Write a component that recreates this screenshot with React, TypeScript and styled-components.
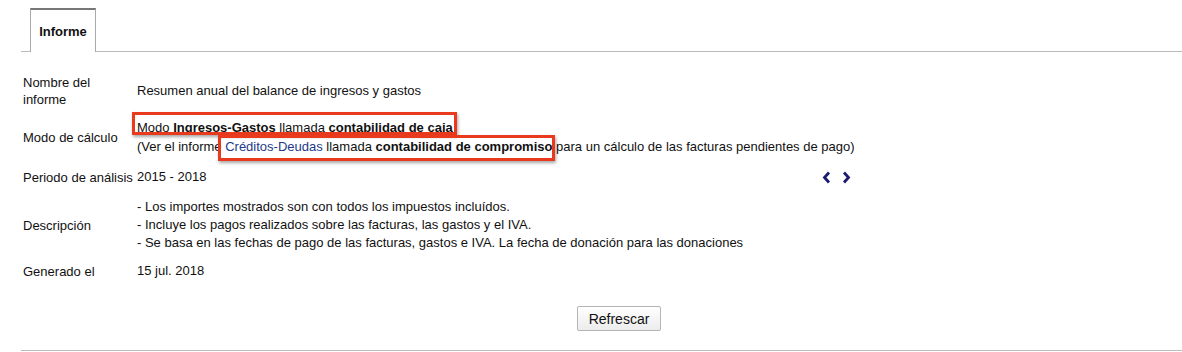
import styled, { createGlobalStyle } from "styled-components";

const GlobalStyle = createGlobalStyle`
  html, body {
    margin: 0;
    padding: 0;
    background: #fff;
  }
  body {
    font-family: "Liberation Sans", Arial, sans-serif;
    font-size: 13px;
    color: #111;
  }
`;

const Page = styled.div`
  width: 1182px;
  height: 352px;
  overflow: hidden;
`;

const TabBar = styled.div`
  display: flex;
  margin-left: 21px;
  padding-top: 8px;
  padding-left: 9px;
  border-bottom: 1px solid #bcbcbc;
`;

const Tab = styled.div`
  width: 66px;
  height: 44px;
  box-sizing: border-box;
  border: 1px solid #aaa;
  border-top: 2px solid #777;
  border-bottom: none;
  display: flex;
  align-items: center;
  justify-content: center;
  font-weight: bold;
  font-size: 13px;
  color: #111;
  margin-bottom: -1px;
  background: #fff;
`;

const Content = styled.div`
  padding: 17px 0 0 23px;
`;

const InfoTable = styled.div`
  width: 840px;
  display: grid;
  grid-template-columns: 114px 1fr;
`;

const Label = styled.div<{ $pad?: number }>`
  padding: ${(p) => p.$pad ?? 5}px 0;
  display: flex;
  align-items: center;
  line-height: 17px;
`;

const Value = styled.div<{ $pad?: number; $lh?: number }>`
  padding: ${(p) => p.$pad ?? 5}px 0;
  display: flex;
  flex-direction: column;
  justify-content: center;
  line-height: ${(p) => p.$lh ?? 18}px;
  white-space: nowrap;
`;

const PeriodValue = styled(Value)`
  flex-direction: row;
  align-items: center;
  justify-content: space-between;
`;

const Link = styled.span`
  color: #24398a;
`;

const Marked = styled.span<{ $t: number; $b: number; $l: number; $r: number }>`
  position: relative;
  &::after {
    content: "";
    position: absolute;
    top: ${(p) => p.$t}px;
    bottom: ${(p) => p.$b}px;
    left: ${(p) => p.$l}px;
    right: ${(p) => p.$r}px;
    border: 3px solid #ea3a1d;
    box-shadow: 1px 2px 3px rgba(0, 0, 0, 0.35);
    pointer-events: none;
  }
`;

const Arrows = styled.div`
  display: flex;
  gap: 10px;
  align-items: center;
  margin-right: 12px;
`;

const ArrowButton = styled.span`
  display: inline-flex;
  width: 10px;
  height: 14px;
  align-items: center;
  justify-content: center;
  cursor: pointer;
`;

const ButtonRow = styled.div`
  display: flex;
  justify-content: center;
  padding: 21px 0 19px 35px;
  margin-left: 21px;
  border-bottom: 1px solid #bcbcbc;
`;

const RefreshButton = styled.button`
  width: 84px;
  height: 25px;
  border: 1px solid #b4b4b4;
  border-radius: 2px;
  background: linear-gradient(#ffffff, #ececec);
  font-family: "Liberation Sans", Arial, sans-serif;
  font-size: 14px;
  color: #111;
  padding: 0;
`;

const Chevron = ({ dir }: { dir: "left" | "right" }) => (
  <svg width="9" height="13" viewBox="0 0 9 13">
    <path
      d={dir === "left" ? "M7 1.5 L2.5 6.5 L7 11.5" : "M2 1.5 L6.5 6.5 L2 11.5"}
      fill="none"
      stroke="#1b1b70"
      strokeWidth="2.8"
    />
  </svg>
);

export default function App() {
  return (
    <Page>
      <GlobalStyle />
      <TabBar>
        <Tab>Informe</Tab>
      </TabBar>
      <Content>
        <InfoTable>
          <Label>
            Nombre del
            <br />
            informe
          </Label>
          <Value>Resumen anual del balance de ingresos y gastos</Value>

          <Label>Modo de cálculo</Label>
          <Value $lh={19}>
            <div>
              <Marked $t={-8} $b={0} $l={-5} $r={-4}>
                Modo <b>Ingresos-Gastos</b> llamada <b>contabilidad de caja</b>
              </Marked>
            </div>
            <div>
              (Ver el informe{" "}
              <Marked $t={-4} $b={-7} $l={-7} $r={-3}>
                <Link>Créditos-Deudas</Link> llamada <b>contabilidad de compromiso</b>
              </Marked>{" "}
              para un cálculo de las facturas pendientes de pago)
            </div>
          </Value>

          <Label $pad={7}>Periodo de análisis</Label>
          <PeriodValue $pad={7}>
            <span>2015 - 2018</span>
            <Arrows>
              <ArrowButton>
                <Chevron dir="left" />
              </ArrowButton>
              <ArrowButton>
                <Chevron dir="right" />
              </ArrowButton>
            </Arrows>
          </PeriodValue>

          <Label>Descripción</Label>
          <Value>
            <div>- Los importes mostrados son con todos los impuestos incluídos.</div>
            <div>- Incluye los pagos realizados sobre las facturas, las gastos y el IVA.</div>
            <div>
              - Se basa en las fechas de pago de las facturas, gastos e IVA. La fecha de donación
              para las donaciones
            </div>
          </Value>

          <Label>Generado el</Label>
          <Value>15 jul. 2018</Value>
        </InfoTable>
      </Content>
      <ButtonRow>
        <RefreshButton>Refrescar</RefreshButton>
      </ButtonRow>
    </Page>
  );
}
